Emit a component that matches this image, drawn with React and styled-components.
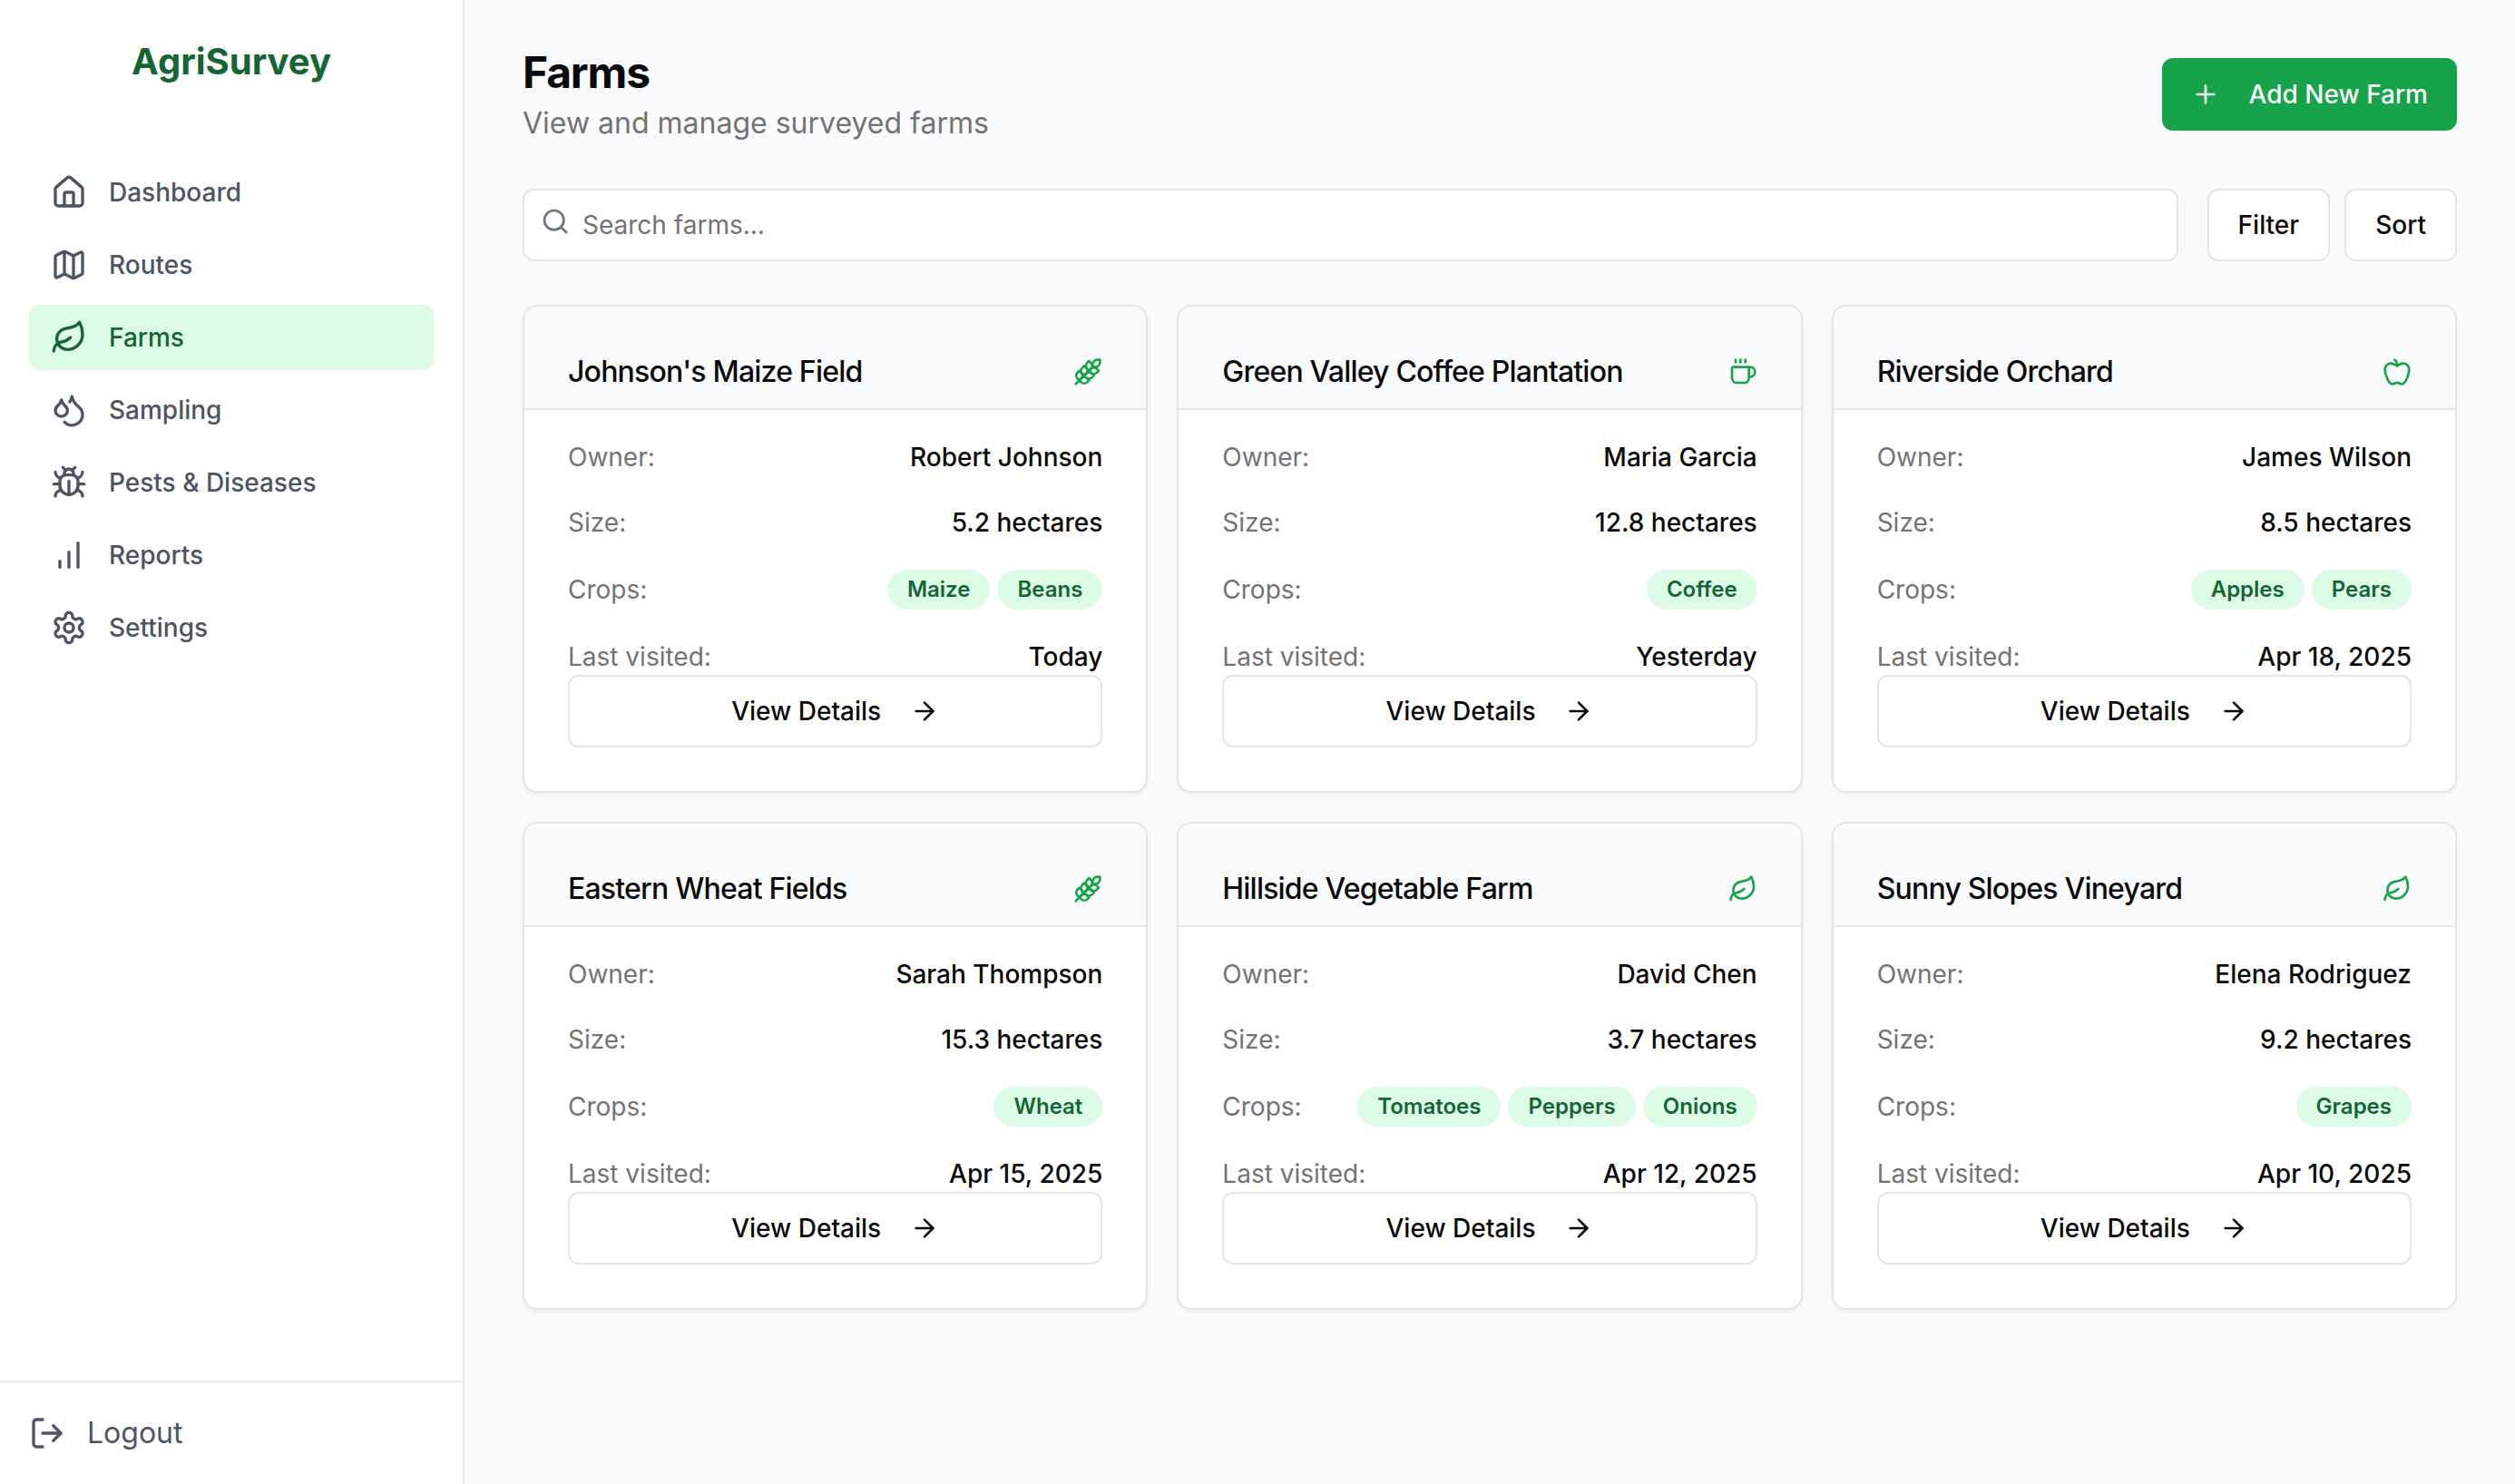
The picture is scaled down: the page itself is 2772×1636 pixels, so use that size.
import React from "react";
import styled, { createGlobalStyle } from "styled-components";
import {
  ArrowRight,
  Coffee,
  Droplets,
  House,
  Leaf,
  LogOut,
  Map,
  Plus,
  Search,
  Wheat,
} from "lucide-react";

const color = {
  page: "#f9fafb",
  surface: "#ffffff",
  text: "#0a0a0a",
  muted: "#737373",
  nav: "#4b5563",
  border: "#e5e5e5",
  sidebarBorder: "#e5e7eb",
  green: "#16a34a",
  greenDark: "#166534",
  greenSoft: "#dcfce7",
};

const GlobalStyle = createGlobalStyle`
  *, *::before, *::after {
    box-sizing: border-box;
  }
  body {
    margin: 0;
    background: ${color.page};
    color: ${color.text};
    font-family: Inter, "Liberation Sans", sans-serif;
    font-size: 32px;
    line-height: 48px;
    -webkit-font-smoothing: antialiased;
  }
  h1, h2, p, ul, dl, dt, dd {
    margin: 0;
    padding: 0;
  }
  ul {
    list-style: none;
  }
  button, input {
    font: inherit;
    color: inherit;
  }
  svg {
    flex-shrink: 0;
  }
`;

const Layout = styled.div`
  display: flex;
  min-height: 100vh;
`;

const Sidebar = styled.aside`
  display: flex;
  flex-direction: column;
  flex: none;
  width: 512px;
  background: ${color.surface};
  border-right: 2px solid ${color.sidebarBorder};
`;

const Brand = styled.div`
  padding: 40px 32px;
  font-size: 40px;
  line-height: 56px;
  font-weight: 700;
  text-align: center;
  color: ${color.greenDark};
`;

const Nav = styled.nav`
  flex: 1;
  padding: 40px 32px;
`;

const NavList = styled.ul`
  display: flex;
  flex-direction: column;
  gap: 8px;
`;

const NavLink = styled.a`
  display: flex;
  align-items: center;
  gap: 24px;
  padding: 16px 24px;
  border-radius: 12px;
  font-size: 28px;
  line-height: 40px;
  font-weight: 500;
  text-decoration: none;
  color: ${(p) => (p.$active ? color.greenDark : color.nav)};
  background: ${(p) => (p.$active ? color.greenSoft : "transparent")};
`;

const SidebarFooter = styled.div`
  padding: 32px;
  border-top: 2px solid ${color.sidebarBorder};
`;

const LogoutButton = styled.button`
  display: flex;
  align-items: center;
  gap: 24px;
  width: 100%;
  padding: 0;
  border: 0;
  background: none;
  color: ${color.nav};
  cursor: pointer;
`;

const Main = styled.main`
  flex: 1;
  min-width: 0;
  display: flex;
  flex-direction: column;
  gap: 48px;
  padding: 48px 64px;
`;

const PageHeader = styled.header`
  display: flex;
  align-items: center;
  justify-content: space-between;
`;

const PageTitle = styled.h1`
  font-size: 48px;
  line-height: 64px;
  font-weight: 700;
  letter-spacing: -0.025em;
`;

const Subtitle = styled.p`
  color: ${color.muted};
`;

const Button = styled.button`
  display: inline-flex;
  align-items: center;
  justify-content: center;
  gap: 32px;
  width: ${(p) => (p.$block ? "100%" : "auto")};
  height: 80px;
  padding: 0 32px;
  border: ${(p) => (p.$primary ? "0" : `2px solid ${color.border}`)};
  border-radius: 12px;
  font-size: 28px;
  line-height: 40px;
  font-weight: 500;
  white-space: nowrap;
  color: ${(p) => (p.$primary ? "#fafafa" : color.text)};
  background: ${(p) => (p.$primary ? color.green : color.surface)};
  cursor: pointer;
`;

const Toolbar = styled.div`
  display: flex;
  gap: 32px;
`;

const SearchField = styled.label`
  position: relative;
  flex: 1;

  svg {
    position: absolute;
    left: 20px;
    top: 20px;
    color: #6b7280;
  }
`;

const SearchInput = styled.input`
  display: block;
  width: 100%;
  height: 80px;
  padding: 16px 24px 16px 64px;
  border: 2px solid ${color.border};
  border-radius: 12px;
  background: ${color.surface};
  font-size: 28px;
  line-height: 40px;

  &::placeholder {
    color: ${color.muted};
    opacity: 1;
  }
`;

const ToolbarActions = styled.div`
  display: flex;
  gap: 16px;
`;

const CardGrid = styled.div`
  display: grid;
  grid-template-columns: repeat(3, minmax(0, 1fr));
  gap: 32px;
`;

const Card = styled.article`
  overflow: hidden;
  background: ${color.surface};
  border: 2px solid ${color.border};
  border-radius: 16px;
  box-shadow: 0 2px 4px rgba(0, 0, 0, 0.05);
`;

const CardHeader = styled.div`
  display: flex;
  align-items: center;
  justify-content: space-between;
  padding: 48px 48px 16px;
  background: ${color.page};
  border-bottom: 2px solid ${color.border};

  svg {
    color: ${color.green};
  }
`;

const CardTitle = styled.h2`
  font-size: 32px;
  line-height: 48px;
  font-weight: 500;
  letter-spacing: -0.025em;
`;

const CardBody = styled.div`
  padding: 32px 48px 48px;
`;

const Details = styled.dl`
  display: flex;
  flex-direction: column;
  gap: 32px;
  font-size: 28px;
  line-height: 40px;
`;

const DetailRow = styled.div`
  display: flex;
  align-items: center;
  justify-content: space-between;
`;

const DetailLabel = styled.dt`
  color: ${color.muted};
`;

const DetailValue = styled.dd`
  display: flex;
  gap: 8px;
  font-weight: 500;
`;

const Badge = styled.span`
  padding: 4px 20px;
  border: 2px solid transparent;
  border-radius: 22px;
  font-size: 24px;
  line-height: 32px;
  font-weight: 600;
  color: ${color.greenDark};
  background: ${color.greenSoft};
`;

const Glyph = ({ size = 40, children }) => (
  <svg
    width={size}
    height={size}
    viewBox="0 0 24 24"
    fill="none"
    stroke="currentColor"
    strokeWidth="2"
    strokeLinecap="round"
    strokeLinejoin="round"
    aria-hidden="true"
  >
    {children}
  </svg>
);

const AppleIcon = ({ size }) => (
  <Glyph size={size}>
    <path d="M12 20.94c1.5 0 2.75 1.06 4 1.06 3 0 6-8 6-12.22A4.91 4.91 0 0 0 17 5c-2.22 0-4 1.44-5 2-1-.56-2.78-2-5-2a4.9 4.9 0 0 0-5 4.78C2 14 5 22 8 22c1.25 0 2.5-1.06 4-1.06Z" />
    <path d="M10 2c1 .5 2 2 2 5" />
  </Glyph>
);

const BugIcon = ({ size }) => (
  <Glyph size={size}>
    <path d="m8 2 1.88 1.88" />
    <path d="M14.12 3.88 16 2" />
    <path d="M9 7.13v-1a3.003 3.003 0 1 1 6 0v1" />
    <path d="M12 20c-3.3 0-6-2.7-6-6v-3a4 4 0 0 1 4-4h4a4 4 0 0 1 4 4v3c0 3.3-2.7 6-6 6" />
    <path d="M12 20v-9" />
    <path d="M6.53 9C4.6 8.8 3 7.1 3 5" />
    <path d="M6 13H2" />
    <path d="M3 21c0-2.1 1.7-3.9 3.8-4" />
    <path d="M20.97 5c0 2.1-1.6 3.8-3.5 4" />
    <path d="M22 13h-4" />
    <path d="M17.2 17c2.1.1 3.8 1.9 3.8 4" />
  </Glyph>
);

const BarsIcon = ({ size }) => (
  <Glyph size={size}>
    <path d="M12 20V10" />
    <path d="M18 20V4" />
    <path d="M6 20v-4" />
  </Glyph>
);

const GearIcon = ({ size }) => (
  <Glyph size={size}>
    <path d="M12.22 2h-.44a2 2 0 0 0-2 2v.18a2 2 0 0 1-1 1.73l-.43.25a2 2 0 0 1-2 0l-.15-.08a2 2 0 0 0-2.73.73l-.22.38a2 2 0 0 0 .73 2.73l.15.1a2 2 0 0 1 1 1.72v.51a2 2 0 0 1-1 1.74l-.15.09a2 2 0 0 0-.73 2.73l.22.38a2 2 0 0 0 2.73.73l.15-.08a2 2 0 0 1 2 0l.43.25a2 2 0 0 1 1 1.73V20a2 2 0 0 0 2 2h.44a2 2 0 0 0 2-2v-.18a2 2 0 0 1 1-1.73l.43-.25a2 2 0 0 1 2 0l.15.08a2 2 0 0 0 2.73-.73l.22-.39a2 2 0 0 0-.73-2.73l-.15-.08a2 2 0 0 1-1-1.74v-.5a2 2 0 0 1 1-1.74l.15-.09a2 2 0 0 0 .73-2.73l-.22-.38a2 2 0 0 0-2.73-.73l-.15.08a2 2 0 0 1-2 0l-.43-.25a2 2 0 0 1-1-1.73V4a2 2 0 0 0-2-2z" />
    <circle cx="12" cy="12" r="3" />
  </Glyph>
);

const navItems = [
  { label: "Dashboard", icon: House },
  { label: "Routes", icon: Map },
  { label: "Farms", icon: Leaf, active: true },
  { label: "Sampling", icon: Droplets },
  { label: "Pests & Diseases", icon: BugIcon },
  { label: "Reports", icon: BarsIcon },
  { label: "Settings", icon: GearIcon },
];

const farms = [
  { name: "Johnson's Maize Field", icon: Wheat, owner: "Robert Johnson", size: "5.2 hectares", crops: ["Maize", "Beans"], visited: "Today" },
  { name: "Green Valley Coffee Plantation", icon: Coffee, owner: "Maria Garcia", size: "12.8 hectares", crops: ["Coffee"], visited: "Yesterday" },
  { name: "Riverside Orchard", icon: AppleIcon, owner: "James Wilson", size: "8.5 hectares", crops: ["Apples", "Pears"], visited: "Apr 18, 2025" },
  { name: "Eastern Wheat Fields", icon: Wheat, owner: "Sarah Thompson", size: "15.3 hectares", crops: ["Wheat"], visited: "Apr 15, 2025" },
  { name: "Hillside Vegetable Farm", icon: Leaf, owner: "David Chen", size: "3.7 hectares", crops: ["Tomatoes", "Peppers", "Onions"], visited: "Apr 12, 2025" },
  { name: "Sunny Slopes Vineyard", icon: Leaf, owner: "Elena Rodriguez", size: "9.2 hectares", crops: ["Grapes"], visited: "Apr 10, 2025" },
];

function Detail({ label, children }) {
  return (
    <DetailRow>
      <DetailLabel>{label}:</DetailLabel>
      <DetailValue>{children}</DetailValue>
    </DetailRow>
  );
}

function FarmCard({ farm }) {
  const Icon = farm.icon;
  return (
    <Card>
      <CardHeader>
        <CardTitle>{farm.name}</CardTitle>
        <Icon size={32} />
      </CardHeader>
      <CardBody>
        <Details>
          <Detail label="Owner">{farm.owner}</Detail>
          <Detail label="Size">{farm.size}</Detail>
          <Detail label="Crops">
            {farm.crops.map((crop) => (
              <Badge key={crop}>{crop}</Badge>
            ))}
          </Detail>
          <Detail label="Last visited">{farm.visited}</Detail>
        </Details>
        <Button type="button" $block>
          View Details
          <ArrowRight size={32} />
        </Button>
      </CardBody>
    </Card>
  );
}

export default function App() {
  return (
    <>
      <GlobalStyle />
      <Layout>
        <Sidebar>
          <Brand>AgriSurvey</Brand>
          <Nav>
            <NavList>
              {navItems.map(({ label, icon: Icon, active }) => (
                <li key={label}>
                  <NavLink href="#" $active={active} aria-current={active ? "page" : undefined}>
                    <Icon size={40} />
                    {label}
                  </NavLink>
                </li>
              ))}
            </NavList>
          </Nav>
          <SidebarFooter>
            <LogoutButton type="button">
              <LogOut size={40} />
              Logout
            </LogoutButton>
          </SidebarFooter>
        </Sidebar>
        <Main>
          <PageHeader>
            <div>
              <PageTitle>Farms</PageTitle>
              <Subtitle>View and manage surveyed farms</Subtitle>
            </div>
            <Button type="button" $primary>
              <Plus size={32} />
              Add New Farm
            </Button>
          </PageHeader>
          <Toolbar>
            <SearchField>
              <Search size={32} />
              <SearchInput type="search" placeholder="Search farms..." aria-label="Search farms" />
            </SearchField>
            <ToolbarActions>
              <Button type="button">Filter</Button>
              <Button type="button">Sort</Button>
            </ToolbarActions>
          </Toolbar>
          <CardGrid>
            {farms.map((farm) => (
              <FarmCard key={farm.name} farm={farm} />
            ))}
          </CardGrid>
        </Main>
      </Layout>
    </>
  );
}
